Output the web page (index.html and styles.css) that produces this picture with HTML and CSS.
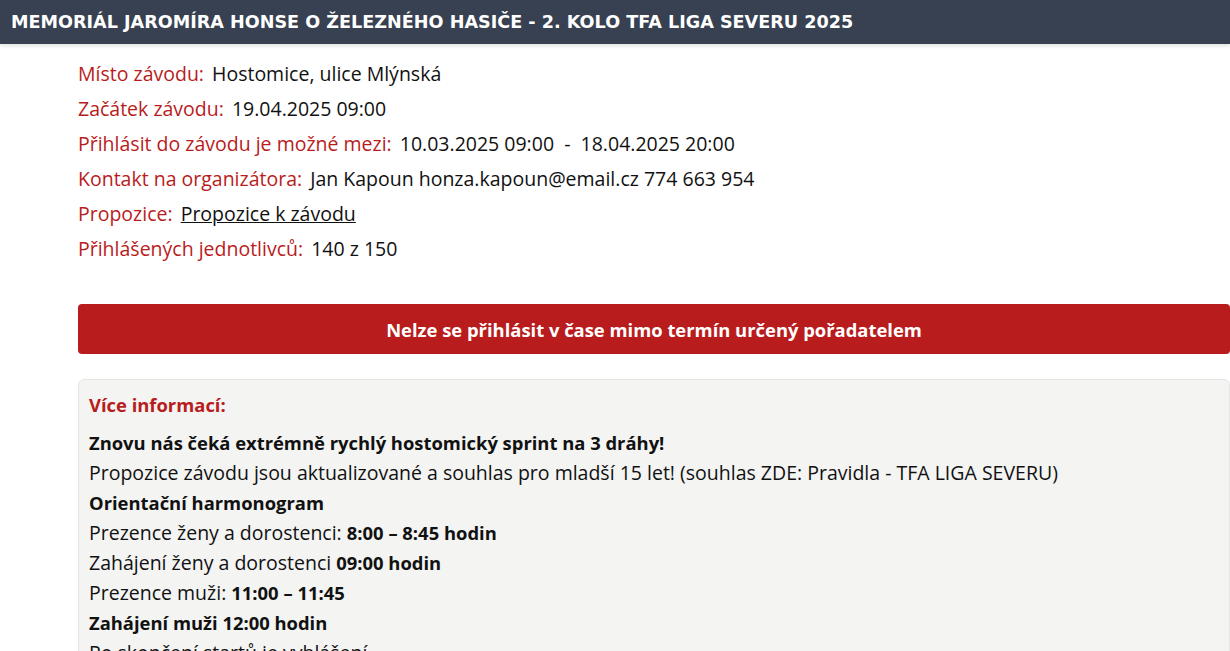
FILE: index.html
```html
<!DOCTYPE html>
<html lang="cs">
<head>
    <meta charset="UTF-8">
    <meta name="viewport" content="width=device-width, initial-scale=1.0">
    <title>Memoriál Jaromíra Honse</title>
    <link rel="stylesheet" href="styles.css">
</head>
<body>
    <header class="top-bar">
        <h1>MEMORIÁL JAROMÍRA HONSE O ŽELEZNÉHO HASIČE - 2. KOLO TFA LIGA SEVERU 2025</h1>
    </header>

    <main class="content">
        <!-- zakladni udaje o zavodu -->
        <div class="details">
            <div class="row"><span class="label">Místo závodu:</span> Hostomice, ulice Mlýnská</div>
            <div class="row"><span class="label">Začátek závodu:</span> 19.04.2025 09:00</div>
            <div class="row"><span class="label">Přihlásit do závodu je možné mezi:</span> 10.03.2025 09:00&nbsp; - &nbsp;18.04.2025 20:00</div>
            <div class="row"><span class="label">Kontakt na organizátora:</span> Jan Kapoun honza.kapoun@email.cz 774 663 954</div>
            <div class="row"><span class="label">Propozice:</span> <a href="#">Propozice k závodu</a></div>
            <div class="row"><span class="label">Přihlášených jednotlivců:</span> 140 z 150</div>
        </div>

        <div class="closed">Nelze se přihlásit v čase mimo termín určený pořadatelem</div>

        <div class="info-box">
            <h3>Více informací:</h3>
            <p><b>Znovu nás čeká extrémně rychlý hostomický sprint na 3 dráhy!</b></p>
            <p>Propozice závodu jsou aktualizované a souhlas pro mladší 15 let! (souhlas ZDE: Pravidla - TFA LIGA SEVERU)</p>
            <p><b>Orientační harmonogram</b></p>
            <p>Prezence ženy a dorostenci: <b>8:00 – 8:45 hodin</b></p>
            <p>Zahájení ženy a dorostenci <b>09:00 hodin</b></p>
            <p>Prezence muži: <b>11:00 – 11:45</b></p>
            <p><b>Zahájení muži 12:00 hodin</b></p>
            <p>Po skončení startů je vyhlášení</p>
        </div>
    </main>
</body>
</html>
```

FILE: styles.css
```css
body {
    margin: 0;
    padding: 0;
    font-family: "Open Sans", "Liberation Sans", sans-serif;
    color: #111;
    background-color: white;
    overflow: hidden;
}

.top-bar {
    background-color: #374151;
    height: 44px;
    display: flex;
    align-items: center;
    padding-left: 11px;
    box-shadow: 0 2px 4px rgba(0, 0, 0, 0.12);
}

.top-bar h1 {
    margin: 0;
    color: white;
    font-size: 17.6px;
    font-weight: bold;
    font-family: "DejaVu Sans", sans-serif;
}

.content {
    padding: 12px 0 0 78px;
}

.details {
    font-size: 19.5px;
}

.row {
    line-height: 35px;
}

.label {
    color: #b91c1c;
    margin-right: 3px;
}

.row a {
    color: #111;
}

.closed {
    margin-top: 38px;
    height: 50px;
    display: flex;
    align-items: center;
    justify-content: center;
    background-color: #b91c1c;
    color: white;
    font-weight: bold;
    font-size: 18.4px;
    border-radius: 4px;
}

.info-box {
    margin-top: 25px;
    background-color: #f4f4f3;
    border: 1px solid #e5e5e4;
    border-radius: 6px;
    padding: 10px 10px 20px 10px;
    font-size: 19.5px;
}

.info-box h3 {
    margin: 0 0 8px 0;
    color: #b91c1c;
    font-size: 18.4px;
    line-height: 30px;
}

.info-box p {
    margin: 0;
    line-height: 30px;
}

.info-box b {
    font-size: 18.4px;
}
```
